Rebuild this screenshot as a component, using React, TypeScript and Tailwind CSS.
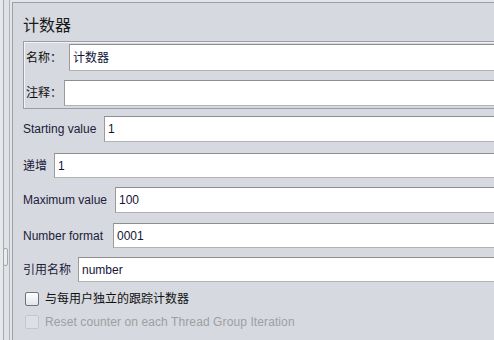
import React from "react";

function Field({ value, className = "" }: { value?: string; className?: string }) {
  return (
    <div
      className={
        "flex-1 h-full bg-white border border-[#b2b2b2] border-t-[#8e8e8e] border-l-[#9a9a9a] flex items-center pl-[3px] text-[12px] text-[#141438] " +
        className
      }
    >
      {value}
    </div>
  );
}

export default function App() {
  return (
    <div className="relative w-[494px] h-[340px] overflow-hidden flex bg-[#d6d9df] font-['Liberation_Sans','Noto_Sans_CJK_SC',sans-serif] text-[#20203a]">
      {/* left splitter strip */}
      <div className="relative flex h-full shrink-0">
        <div className="w-[3px] h-full bg-[#e6e8ec]" />
        <div className="w-[1px] h-full bg-[#a6a9af]" />
        <div className="w-[5px] h-full bg-[#dfe2e6]" />
        <div className="w-[1px] h-full bg-[#aeb1b7]" />
        <div className="w-[2px] h-full bg-[#e3e5e9]" />
        <div className="absolute left-[3px] top-[248px] w-[5px] h-[18px] rounded-[2px] border border-[#a3a6ac] bg-[#e9ebee]" />
      </div>
      {/* main panel */}
      <div className="flex-1 flex flex-col">
        <div className="h-[2px] bg-[#e3e5e9]" />
        <div className="flex-1 border-t border-l border-[#9c9fa5] pl-[10px]">
          <div className="w-[600px] flex flex-col">
            <div className="mt-[13px] h-[20px] leading-[20px] text-[16px] text-[#1a1a1a]">计数器</div>
            <div className="mt-[5px] border border-[#9a9da3] shadow-[inset_1px_1px_0_#f3f4f6] pt-[2px] pb-[2px] pl-[1px] flex flex-col">
              <div className="flex items-center h-[27px]">
                <div className="w-[44px] pl-[1px] text-[12px] text-[#111]">名称：</div>
                <Field value="计数器" />
              </div>
              <div className="flex items-center h-[26px] mt-[9px]">
                <div className="w-[39px] pl-[1px] text-[12px] text-[#111]">注释：</div>
                <Field />
              </div>
            </div>
            <div className="mt-[7px] flex items-center h-[26px]">
              <div className="w-[81px] text-[12px]">Starting value</div>
              <Field value="1" />
            </div>
            <div className="mt-[11px] flex items-center h-[25px]">
              <div className="w-[31px] text-[12px]">递增</div>
              <Field value="1" />
            </div>
            <div className="mt-[9px] flex items-center h-[26px]">
              <div className="w-[92px] text-[12px]">Maximum value</div>
              <Field value="100" />
            </div>
            <div className="mt-[10px] flex items-center h-[25px]">
              <div className="w-[90px] text-[12px]">Number format</div>
              <Field value="0001" />
            </div>
            <div className="mt-[9px] flex items-center h-[25px]">
              <div className="w-[55px] text-[12px]">引用名称</div>
              <Field value="number" />
            </div>
            <div className="mt-[10px] flex items-center h-[14px] pl-[2px]">
              <div className="w-[14px] h-[14px] rounded-[2px] border border-[#6f7176] bg-gradient-to-b from-[#ffffff] to-[#e2e4e8]" />
              <div className="ml-[6px] text-[12px] text-[#111]">与每用户独立的跟踪计数器</div>
            </div>
            <div className="mt-[9px] flex items-center h-[14px] pl-[2px]">
              <div className="w-[14px] h-[14px] rounded-[2px] border border-[#c5c7cb] bg-[#dcdfe3]" />
              <div className="ml-[6px] text-[12px] tracking-[0.1px] text-[#9d9fa3]">Reset counter on each Thread Group Iteration</div>
            </div>
          </div>
        </div>
      </div>
    </div>
  );
}
